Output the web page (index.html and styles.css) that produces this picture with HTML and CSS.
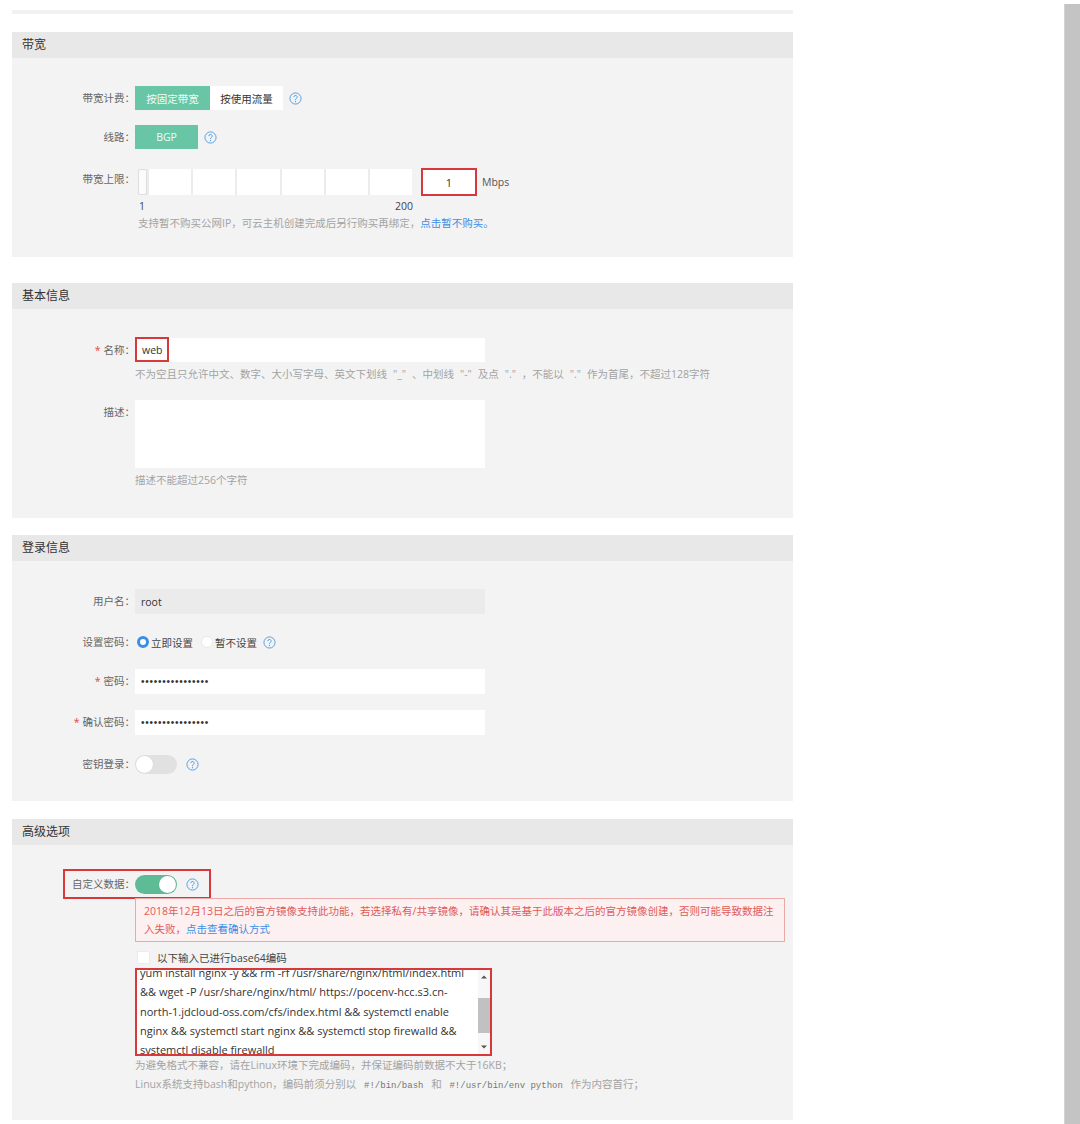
FILE: index.html
```html
<!DOCTYPE html>
<html lang="zh-CN">
<head>
<meta charset="utf-8">
<title>云主机配置</title>
<link rel="stylesheet" href="styles.css">
</head>
<body>
<div class="screen">
  <main class="content">
    <div class="prev-edge"></div>

    <section class="panel p1">
      <div class="panel-head">带宽</div>
      <div class="panel-body b1">
        <div class="row">
          <div class="label">带宽计费：</div>
          <div class="ctrl">
            <span class="btn on w1">按固定带宽</span><span class="btn w2">按使用流量</span>
            <svg class="help" viewBox="0 0 14 14"><circle cx="7" cy="7" r="6" fill="none" stroke="#4b9be8" stroke-width="1"/><path d="M5.2 5.5a1.8 1.8 0 1 1 2.6 1.6c-.5.3-.8.6-.8 1.2v.6" fill="none" stroke="#4b9be8" stroke-width="1"/><circle cx="7" cy="10.4" r=".65" fill="#4b9be8"/></svg>
          </div>
        </div>
        <div class="row r-line">
          <div class="label">线路：</div>
          <div class="ctrl">
            <span class="btn on bgp">BGP</span>
            <svg class="help" viewBox="0 0 14 14"><circle cx="7" cy="7" r="6" fill="none" stroke="#4b9be8" stroke-width="1"/><path d="M5.2 5.5a1.8 1.8 0 1 1 2.6 1.6c-.5.3-.8.6-.8 1.2v.6" fill="none" stroke="#4b9be8" stroke-width="1"/><circle cx="7" cy="10.4" r=".65" fill="#4b9be8"/></svg>
          </div>
        </div>
        <div class="row r-bw">
          <div class="label lbl-bw">带宽上限：</div>
          <div class="bw">
            <div class="bw-top">
              <div class="slider">
                <span class="handle"></span>
                <span class="cell"></span><span class="cell"></span><span class="cell"></span>
                <span class="cell"></span><span class="cell"></span><span class="cell"></span>
              </div>
              <div class="num-box">1</div>
              <span class="unit">Mbps</span>
            </div>
            <div class="scale"><span>1</span><span>200</span></div>
            <div class="hint hint-bw">支持暂不购买公网IP，可云主机创建完成后另行购买再绑定，<span class="link">点击暂不购买。</span></div>
          </div>
        </div>
      </div>
    </section>

    <section class="panel p2">
      <div class="panel-head">基本信息</div>
      <div class="panel-body b2">
        <div class="row">
          <div class="label"><span class="req">*</span>名称：</div>
          <div class="col">
            <div class="input"><span class="mark-web">web</span></div>
            <div class="hint hint-s">不为空且只允许中文、数字、大小写字母、英文下划线<span class="q">"_"</span>、中划线<span class="q">"-"</span>及点<span class="q">"."</span>，不能以<span class="q">"."</span>作为首尾，不超过128字符</div>
          </div>
        </div>
        <div class="row r-desc">
          <div class="label">描述：</div>
          <div class="col">
            <div class="textarea"></div>
            <div class="hint hint-s">描述不能超过256个字符</div>
          </div>
        </div>
      </div>
    </section>

    <section class="panel p3">
      <div class="panel-head">登录信息</div>
      <div class="panel-body b3">
        <div class="row">
          <div class="label l25">用户名：</div>
          <div class="input tall disabled">root</div>
        </div>
        <div class="row r-radio">
          <div class="label">设置密码：</div>
          <div class="ctrl">
            <span class="radio checked"></span><span class="radio-text">立即设置</span>
            <span class="radio"></span><span class="radio-text">暂不设置</span>
            <svg class="help" viewBox="0 0 14 14"><circle cx="7" cy="7" r="6" fill="none" stroke="#4b9be8" stroke-width="1"/><path d="M5.2 5.5a1.8 1.8 0 1 1 2.6 1.6c-.5.3-.8.6-.8 1.2v.6" fill="none" stroke="#4b9be8" stroke-width="1"/><circle cx="7" cy="10.4" r=".65" fill="#4b9be8"/></svg>
          </div>
        </div>
        <div class="row r-pwd">
          <div class="label l25"><span class="req">*</span>密码：</div>
          <div class="input tall"><span class="dots">••••••••••••••••</span></div>
        </div>
        <div class="row r-pwd2">
          <div class="label l25"><span class="req">*</span>确认密码：</div>
          <div class="input tall"><span class="dots">••••••••••••••••</span></div>
        </div>
        <div class="row r-key">
          <div class="label">密钥登录：</div>
          <div class="ctrl">
            <span class="toggle"><span class="knob"></span></span>
            <svg class="help h-tog" viewBox="0 0 14 14"><circle cx="7" cy="7" r="6" fill="none" stroke="#4b9be8" stroke-width="1"/><path d="M5.2 5.5a1.8 1.8 0 1 1 2.6 1.6c-.5.3-.8.6-.8 1.2v.6" fill="none" stroke="#4b9be8" stroke-width="1"/><circle cx="7" cy="10.4" r=".65" fill="#4b9be8"/></svg>
          </div>
        </div>
      </div>
    </section>

    <section class="panel p4">
      <div class="panel-head">高级选项</div>
      <div class="panel-body b4">
        <div class="hl">
          <div class="label hl-label">自定义数据：</div>
          <span class="toggle on"><span class="knob"></span></span>
          <svg class="help h-tog" viewBox="0 0 14 14"><circle cx="7" cy="7" r="6" fill="none" stroke="#4b9be8" stroke-width="1"/><path d="M5.2 5.5a1.8 1.8 0 1 1 2.6 1.6c-.5.3-.8.6-.8 1.2v.6" fill="none" stroke="#4b9be8" stroke-width="1"/><circle cx="7" cy="10.4" r=".65" fill="#4b9be8"/></svg>
        </div>
        <div class="warn">2018年12月13日之后的官方镜像支持此功能，若选择私有/共享镜像，请确认其是基于此版本之后的官方镜像创建，否则可能导致数据注<br>入失败，<span class="link">点击查看确认方式</span></div>
        <div class="check-row"><span class="checkbox"></span><span class="check-text">以下输入已进行base64编码</span></div>
        <div class="code-box">
          <div class="code-view">
            <div class="code-lines">
              <div>yum install nginx -y &amp;&amp; rm -rf /usr/share/nginx/html/index.html</div>
              <div>&amp;&amp; wget -P /usr/share/nginx/html/ https://pocenv-hcc.s3.cn-</div>
              <div>north-1.jdcloud-oss.com/cfs/index.html &amp;&amp; systemctl enable</div>
              <div>nginx &amp;&amp; systemctl start nginx &amp;&amp; systemctl stop firewalld &amp;&amp;</div>
              <div>systemctl disable firewalld</div>
            </div>
          </div>
          <div class="vscroll">
            <svg class="arr" viewBox="0 0 8 6"><path d="M1 4.5L4 1.5 7 4.5z" fill="#555"/></svg>
            <span class="track"><span class="thumb"></span></span>
            <svg class="arr" viewBox="0 0 8 6"><path d="M1 1.5L4 4.5 7 1.5z" fill="#555"/></svg>
          </div>
        </div>
        <div class="hint hint-l">为避免格式不兼容，请在Linux环境下完成编码，并保证编码前数据不大于16KB；</div>
        <div class="hint hint-l">Linux系统支持bash和python，编码前须分别以 <code>#!/bin/bash</code> 和 <code>#!/usr/bin/env python</code> 作为内容首行；</div>
      </div>
    </section>
  </main>
  <div class="scrollbar"></div>
</div>
</body>
</html>
```

FILE: styles.css
```css
* { box-sizing: border-box; }
html, body { margin: 0; padding: 0; background: #fff; }
body {
  font-family: "Open Sans", "Noto Sans CJK SC", sans-serif;
  font-size: 10.5px;
  color: #666;
}
.screen { display: flex; width: 1080px; height: 1124px; overflow: hidden; }
.content { width: 1064px; flex: none; padding: 10px 0 0 12px; }
.scrollbar { width: 16px; flex: none; margin-top: 4px; background: #c4c4c4; border-left: 1px solid #d2d2d2; }

.prev-edge { width: 781px; height: 4px; background: #f1f1f1; }

.panel { width: 781px; }
.p1 { margin-top: 18px; }
.p2 { margin-top: 26px; }
.p3 { margin-top: 17px; }
.p4 { margin-top: 18px; }
.panel-head {
  height: 26px; line-height: 26px; padding-left: 10px;
  background: #e8e8e8; color: #333; font-size: 12px;
}
.panel-body { background: #f3f3f3; display: flex; flex-direction: column; }
.b1 { padding: 28px 0 25px; }
.b2 { padding: 29px 0 30px; }
.b3 { padding: 28px 0 25px; }
.b4 { padding: 24px 0 24px; }

.row { display: flex; align-items: flex-start; }
.label {
  width: 123px; flex: none; text-align: right; line-height: 24px;
  color: #666; white-space: nowrap;
}
.label.l25 { line-height: 25px; }
.req { color: #e8443a; margin-right: 3px; }
.ctrl { display: flex; align-items: center; height: 24px; }
.col { display: flex; flex-direction: column; }

.r-line { margin-top: 15px; }
.r-bw { margin-top: 19px; }
.r-desc { margin-top: 18px; }
.r-radio { margin-top: 16px; }
.r-pwd { margin-top: 15px; }
.r-pwd2 { margin-top: 16px; }
.r-key { margin-top: 17px; }

.btn {
  display: inline-flex; align-items: center; justify-content: center;
  height: 24px; background: #fff; color: #333; white-space: nowrap;
}
.btn.on { background: #68c6a7; color: #f2fbf8; }
.w1 { width: 75px; }
.w2 { width: 73px; }
.bgp { width: 63px; color: #fff; }

.help { width: 13px; height: 13px; margin-left: 6px; flex: none; }
.help.h-tog { margin-left: 9px; }

.lbl-bw { line-height: 22px; }
.bw { margin-left: 3px; display: flex; flex-direction: column; }
.bw-top { display: flex; align-items: center; height: 28px; }
.slider {
  width: 274px; height: 26px; display: flex; gap: 2px;
  background: #ececec;
}
.handle {
  width: 9px; flex: none; background: #fbfbfb;
  border: 1px solid #dedede; border-radius: 2px;
}
.cell { flex: 1; background: #fff; }
.num-box {
  width: 56px; height: 28px; margin-left: 9px;
  border: 2px solid #d8383a; background: #fff;
  display: flex; align-items: center; justify-content: center;
  color: #333; font-size: 11px;
}
.unit { margin-left: 5px; color: #555; font-size: 10.5px; }
.scale {
  width: 275px; display: flex; justify-content: space-between;
  margin-top: 2px; line-height: 16px; color: #444; padding-left: 1px;
}
.hint { color: #a3a3a3; white-space: nowrap; }
.hint-bw { line-height: 18px; }
.hint-s { margin-top: 4px; line-height: 16px; }
.q { margin: 0 6px; }
.link { color: #3d8ee6; }

.input {
  width: 350px; height: 24px; background: #fff;
  display: flex; align-items: center; color: #333;
}
.input.tall { height: 25px; padding-left: 6px; }
.input.disabled { background: #ebebeb; }
.mark-web {
  height: 25px; margin-top: -1px; padding: 0 5px;
  border: 2px solid #d8383a; display: flex; align-items: center; color: #333;
}
.textarea { width: 350px; height: 68px; background: #fff; }
.dots { font-family: "Liberation Sans", sans-serif; font-size: 10px; letter-spacing: 0.75px; color: #333; }

.radio {
  width: 12px; height: 12px; border-radius: 50%; margin-left: 2px;
  background: #fff; border: 1px solid #eaeaea; flex: none;
}
.radio.checked { background: #fff; border: 3.5px solid #3b8ee5; }
.radio-text { margin-left: 2px; margin-right: 6px; color: #444; }
.radio-text + .help { margin-left: 0; }

.toggle {
  width: 42px; height: 19px; border-radius: 10px; background: #e1e1e1;
  display: flex; align-items: center; padding: 0 1px; flex: none;
}
.toggle .knob {
  width: 17px; height: 17px; border-radius: 50%; background: #fff;
  box-shadow: 0 0 1px rgba(0,0,0,0.15);
}
.toggle.on { background: #5dbb95; justify-content: flex-end; }

.hl {
  margin-left: 51px; width: 148px; height: 30px;
  border: 2px solid #d8383a; display: flex; align-items: center;
}
.label.hl-label { width: 70px; line-height: 20px; }

.warn {
  margin-top: -1px; margin-left: 123px; width: 650px; height: 44px;
  border: 1px solid #eca7a7; background: #fcf0f1; color: #e05a5a;
  padding: 3px 8px 0; line-height: 18px; white-space: nowrap;
}

.check-row { margin: 6px 0 0 125px; display: flex; align-items: center; height: 18px; }
.checkbox { width: 13px; height: 13px; background: #fff; border: 1px solid #ececec; flex: none; }
.check-text { margin-left: 7px; color: #444; }

.code-box {
  margin: 2px 0 0 123px; width: 357px; height: 88px;
  border: 2px solid #d8383a; background: #fff; display: flex;
}
.code-view { flex: 1; overflow: hidden; }
.code-lines { margin-top: -7px; padding-left: 3px; line-height: 19.3px; color: #333; font-size: 11px; white-space: nowrap; }
.vscroll { width: 12px; flex: none; display: flex; flex-direction: column; align-items: center; background: #f7f7f7; }
.arr { width: 8px; height: 6px; margin: 4px 0; flex: none; }
.track { flex: 1; width: 100%; display: flex; flex-direction: column; }
.thumb { margin-top: 14px; height: 35px; background: #c1c1c1; }

.hint-l { margin-left: 123px; line-height: 19px; }
code { font-family: "Liberation Mono", monospace; font-size: 9px; padding: 0 5px; color: #777; }
```
